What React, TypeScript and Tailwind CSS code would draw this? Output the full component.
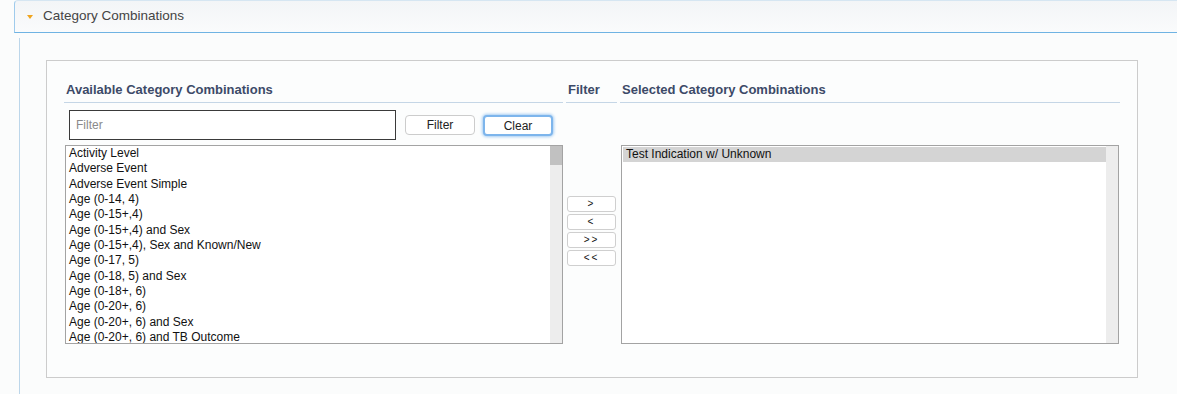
import React from "react";

const available = [
  "Activity Level",
  "Adverse Event",
  "Adverse Event Simple",
  "Age (0-14, 4)",
  "Age (0-15+,4)",
  "Age (0-15+,4) and Sex",
  "Age (0-15+,4), Sex and Known/New",
  "Age (0-17, 5)",
  "Age (0-18, 5) and Sex",
  "Age (0-18+, 6)",
  "Age (0-20+, 6)",
  "Age (0-20+, 6) and Sex",
  "Age (0-20+, 6) and TB Outcome",
];

const ColumnHeading: React.FC<{ children: React.ReactNode }> = ({ children }) => (
  <div className="border-b border-[#c5d6e6] pb-[4px] pl-[2px] text-[13px] font-bold leading-[17px] text-[#3c4a68]">
    {children}
  </div>
);

const MoveButton: React.FC<{ label: string }> = ({ label }) => (
  <button className="flex h-[16px] w-[49px] items-center justify-center rounded-[3px] border border-[#cfcfcf] bg-white text-[10px] leading-none tracking-[2px] text-[#111]">
    {label}
  </button>
);

export default function App() {
  return (
    <div
      className="h-[394px] w-full overflow-hidden bg-[#fbfcfc]"
      style={{ fontFamily: '"Liberation Sans", Arial, sans-serif' }}
    >
      <div className="ml-[14px] flex h-[33px] items-center rounded-tl-[4px] border-b border-l border-t border-[#6fb3e3] border-l-[#9fcbec] border-t-[#d6e6f2] bg-gradient-to-b from-[#f3f5f7] to-[#fafbfc]">
        <span className="ml-[12px] h-0 w-0 border-x-[3.5px] border-t-[4px] border-x-transparent border-t-[#f0a41e]" />
        <span className="ml-[10px] text-[13.5px] text-[#444]">Category Combinations</span>
      </div>

      <div className="ml-[19px] mt-[5px] h-[400px] border-l border-[#bcd6ea] pl-[26px] pt-[22px]">
        <div className="flex h-[318px] w-[1092px] border border-[#cccccc] bg-[#fcfdfd] pl-[17px] pt-[20px]">
          {/* available */}
          <div className="flex w-[499px] flex-col">
            <ColumnHeading>Available Category Combinations</ColumnHeading>
            <div className="mt-[7px] flex items-center">
              <input
                placeholder="Filter"
                className="ml-[5px] h-[30px] w-[327px] border border-[#3a3a3a] bg-white px-[6px] text-[12px] text-[#222] outline-none placeholder:text-[#8a8a8a]"
              />
              <button className="ml-[9px] h-[20px] w-[70px] rounded-[4px] border border-[#cccccc] bg-white text-[12px] text-[#222]">
                Filter
              </button>
              <button className="ml-[8px] h-[21px] w-[70px] rounded-[4px] border-2 border-[#7db5ec] bg-white text-[12px] text-[#222] shadow-[0_0_3px_1px_#a5cdf3]">
                Clear
              </button>
            </div>
            <div className="ml-[1px] mt-[5px] flex h-[199px] w-[498px] overflow-hidden border border-[#a3a3a3] bg-white">
              <div className="flex-1 overflow-hidden pl-[3px]">
                {available.map((item) => (
                  <div key={item} className="h-[15.35px] whitespace-nowrap text-[12px] leading-[15.35px] text-[#111]">
                    {item}
                  </div>
                ))}
              </div>
              <div className="w-[12px] bg-[#ededed]">
                <div className="h-[19px] w-full bg-[#c1c1c1]" />
              </div>
            </div>
          </div>

          {/* move buttons */}
          <div className="ml-[3px] flex w-[51px] flex-col">
            <ColumnHeading>Filter</ColumnHeading>
            <div className="ml-[1px] mt-[93px] flex flex-col gap-[2px]">
              <MoveButton label=">" />
              <MoveButton label="<" />
              <MoveButton label=">>" />
              <MoveButton label="<<" />
            </div>
          </div>

          {/* selected */}
          <div className="ml-[3px] flex w-[500px] flex-col">
            <ColumnHeading>Selected Category Combinations</ColumnHeading>
            <div className="ml-[1px] mt-[42px] flex h-[199px] w-[498px] border border-[#a3a3a3] bg-white">
              <div className="flex-1 pl-[1px] pt-[1px]">
                <div className="h-[15.35px] bg-[#d4d4d4] pl-[3px] text-[12px] leading-[15.35px] text-[#111]">
                  Test Indication w/ Unknown
                </div>
              </div>
              <div className="w-[12px] bg-[#ededed]" />
            </div>
          </div>
        </div>
      </div>
    </div>
  );
}
